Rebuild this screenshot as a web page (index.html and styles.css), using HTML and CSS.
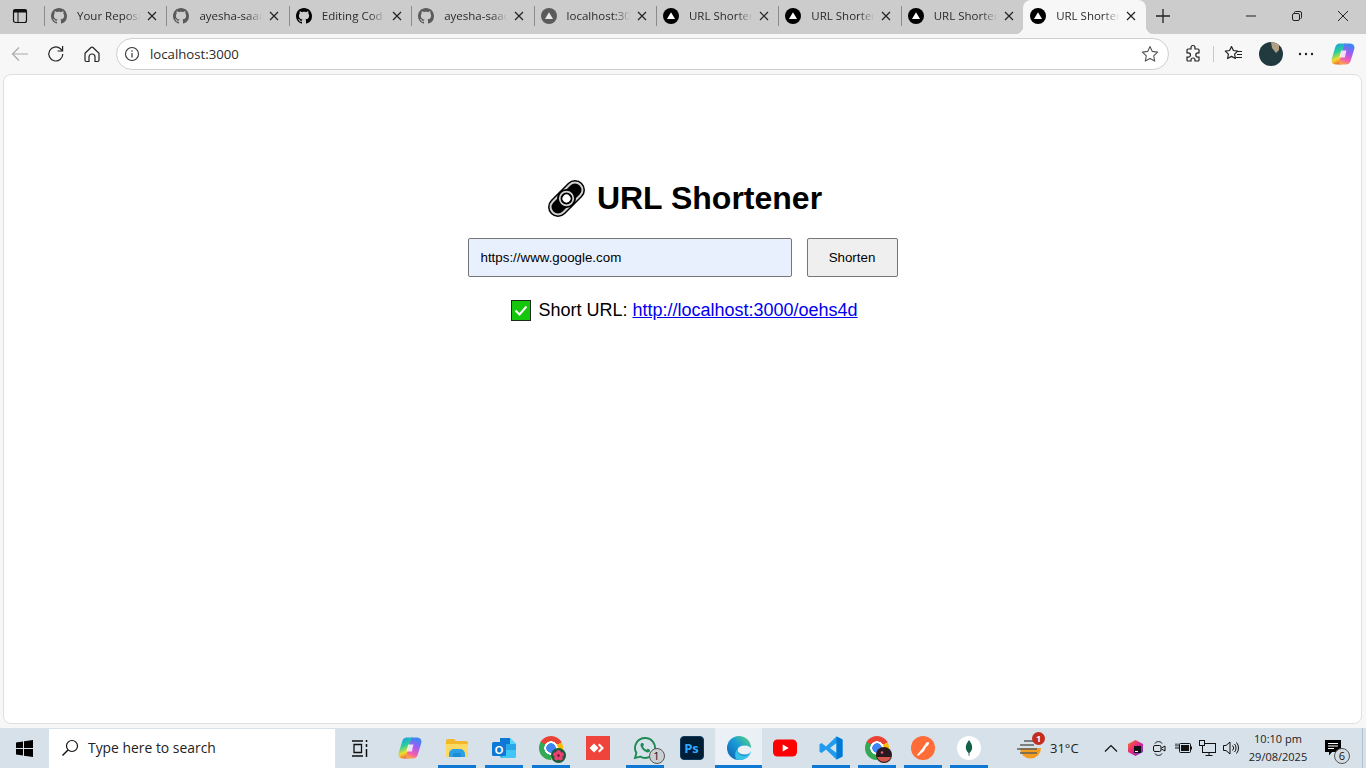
FILE: index.html
```html
<!DOCTYPE html>
<html lang="en">
<head>
<meta charset="utf-8">
<title>URL Shortener</title>
<link rel="stylesheet" href="styles.css">
</head>
<body>
<svg class="defs" width="0" height="0" aria-hidden="true">
  <defs>
    <symbol id="gh" viewBox="0 0 16 16"><path d="M8 0C3.58 0 0 3.58 0 8c0 3.54 2.29 6.53 5.47 7.59.4.07.55-.17.55-.38 0-.19-.01-.82-.01-1.49-2.01.37-2.53-.49-2.69-.94-.09-.23-.48-.94-.82-1.13-.28-.15-.68-.52-.01-.53.63-.01 1.08.58 1.23.82.72 1.21 1.87.87 2.33.66.07-.52.28-.87.51-1.07-1.78-.2-3.64-.89-3.64-3.95 0-.87.31-1.59.82-2.15-.08-.2-.36-1.02.08-2.12 0 0 .67-.21 2.2.82.64-.18 1.32-.27 2-.27.68 0 1.36.09 2 .27 1.53-1.04 2.2-.82 2.2-.82.44 1.1.16 1.92.08 2.12.51.56.82 1.27.82 2.15 0 3.07-1.87 3.75-3.65 3.95.29.25.54.73.54 1.48 0 1.07-.01 1.93-.01 2.2 0 .21.15.46.55.38A8.013 8.013 0 0016 8c0-4.42-3.58-8-8-8z"/></symbol>
    <symbol id="next" viewBox="0 0 16 16"><circle cx="8" cy="8" r="8"/><path d="M8 4.200 12 11H4z" fill="#fff"/></symbol>
    <symbol id="x" viewBox="0 0 10 10"><path d="M1 1l8 8M9 1l-8 8" fill="none" stroke="#222" stroke-width="1.200"/></symbol>
    <linearGradient id="cpa" x1="0.2" y1="0" x2="0.5" y2="1"><stop offset="0" stop-color="#1f9be8"/><stop offset=".4" stop-color="#27cf9a"/><stop offset=".72" stop-color="#f2dc2c"/><stop offset="1" stop-color="#f4563c"/></linearGradient>
    <linearGradient id="cpb" x1="0.7" y1="0" x2="0.4" y2="1"><stop offset="0" stop-color="#2f8cf5"/><stop offset=".45" stop-color="#a35cf2"/><stop offset=".8" stop-color="#f45fb0"/><stop offset="1" stop-color="#f8a04e"/></linearGradient>
    <symbol id="copilot" viewBox="0 0 24 24">
      <path d="M8.500 1.500H14c1.300 0 1.900 1 1.400 2.400L10.500 22.500H5.500C1.800 22.500-.2 20.200.8 16.800L4.300 5C5 2.800 6.500 1.500 8.500 1.500z" fill="url(#cpa)"/>
      <path d="M13.500 1.500h5c3.700 0 5.700 2.400 4.700 5.700l-3.500 11.600c-.7 2.300-2.400 3.700-4.700 3.700H9.500c-1.300 0-1.900-1-1.400-2.300L13 3.500c.2-.8.400-2 .5-2z" fill="url(#cpb)"/>
      <path d="M10.200 8.500h5.300L13.800 15.500H8.300z" fill="#fff" opacity=".8"/>
    </symbol>
  </defs>
</svg>

<header class="tabstrip">
  <div class="sidebar-btn">
    <svg width="16" height="16" viewBox="0 0 16 16"><rect x="1.500" y="1.500" width="13" height="13" rx="2" fill="none" stroke="#111" stroke-width="1.200"/><rect x="1.500" y="1.500" width="13" height="3" fill="#111"/><path d="M6 4v10" stroke="#111"/></svg>
  </div>
  <div class="tab"><i class="sep"></i><svg class="fav dim"><use href="#gh"/></svg><span class="tab-title">Your Reposi</span><svg class="tab-x"><use href="#x"/></svg></div>
  <div class="tab"><i class="sep"></i><svg class="fav dim"><use href="#gh"/></svg><span class="tab-title">ayesha-saac</span><svg class="tab-x"><use href="#x"/></svg></div>
  <div class="tab"><i class="sep"></i><svg class="fav"><use href="#gh"/></svg><span class="tab-title">Editing Cod</span><svg class="tab-x"><use href="#x"/></svg></div>
  <div class="tab"><i class="sep"></i><svg class="fav dim"><use href="#gh"/></svg><span class="tab-title">ayesha-saac</span><svg class="tab-x"><use href="#x"/></svg></div>
  <div class="tab"><i class="sep"></i><svg class="fav dim"><use href="#next"/></svg><span class="tab-title">localhost:30</span><svg class="tab-x"><use href="#x"/></svg></div>
  <div class="tab"><i class="sep"></i><svg class="fav"><use href="#next"/></svg><span class="tab-title">URL Shorter</span><svg class="tab-x"><use href="#x"/></svg></div>
  <div class="tab"><i class="sep"></i><svg class="fav"><use href="#next"/></svg><span class="tab-title">URL Shorter</span><svg class="tab-x"><use href="#x"/></svg></div>
  <div class="tab"><i class="sep"></i><svg class="fav"><use href="#next"/></svg><span class="tab-title">URL Shorter</span><svg class="tab-x"><use href="#x"/></svg></div>
  <div class="tab active"><i class="sep none"></i><svg class="fav"><use href="#next"/></svg><span class="tab-title">URL Shorter</span><svg class="tab-x"><use href="#x"/></svg></div>
  <div class="new-tab"><svg width="16" height="16" viewBox="0 0 16 16"><path d="M8 1v14M1 8h14" stroke="#222" stroke-width="1.300"/></svg></div>
  <div class="win-controls">
    <div class="win-btn"><svg width="12" height="12" viewBox="0 0 12 12"><path d="M1 6h10" stroke="#222"/></svg></div>
    <div class="win-btn"><svg width="12" height="12" viewBox="0 0 12 12"><rect x="1.500" y="3.500" width="7" height="7" rx="1.500" fill="none" stroke="#222"/><path d="M3.500 3V2.500a1 1 0 0 1 1-1h4.500a1.500 1.500 0 0 1 1.500 1.500v4.500a1 1 0 0 1-1 1" fill="none" stroke="#222"/></svg></div>
    <div class="win-btn"><svg width="12" height="12" viewBox="0 0 12 12"><path d="M1 1l10 10M11 1L1 11" stroke="#222"/></svg></div>
  </div>
</header>

<nav class="toolbar">
  <div class="tool first"><svg width="20" height="20" viewBox="0 0 20 20"><path d="M18 10H2.500M9 3.500 2.500 10 9 16.500" fill="none" stroke="#aaa" stroke-width="1.200"/></svg></div>
  <div class="tool"><svg width="20" height="20" viewBox="0 0 20 20"><path d="M16.800 10a7 7 0 1 1-2.300-5.200L16.500 7" fill="none" stroke="#222" stroke-width="1.200"/><path d="M16.600 2v5h-5" fill="none" stroke="#222" stroke-width="1.200"/></svg></div>
  <div class="tool"><svg width="20" height="20" viewBox="0 0 20 20"><path d="M3 9.200 9 3.500a1.500 1.500 0 0 1 2 0l6 5.700V16a1.500 1.500 0 0 1-1.500 1.500H13V13a3 3 0 0 0-6 0v4.500H4.500A1.500 1.500 0 0 1 3 16z" fill="none" stroke="#222" stroke-width="1.200"/></svg></div>
  <div class="address">
    <svg class="addr-info" width="16" height="16" viewBox="0 0 16 16"><circle cx="8" cy="8" r="6.500" fill="none" stroke="#333" stroke-width="1.100"/><path d="M8 7v4.500" stroke="#333" stroke-width="1.200"/><circle cx="8" cy="5" r=".8" fill="#333"/></svg>
    <span class="addr-text">localhost:3000</span>
    <svg class="addr-star" width="18" height="18" viewBox="0 0 18 18"><path d="M9 1.500l2.300 4.900 5.300.7-3.900 3.700 1 5.300L9 13.500 4.300 16.100l1-5.300L1.400 7.100l5.300-.7z" fill="none" stroke="#555" stroke-width="1.100" stroke-linejoin="round"/></svg>
  </div>
  <div class="tool ext"><svg width="20" height="20" viewBox="0 0 20 20"><path d="M8 3.500a2 2 0 0 1 4 0V5h3a1 1 0 0 1 1 1v2.800h-1a2.200 2.200 0 0 0 0 4.400h1V16a1 1 0 0 1-1 1h-3v-1a2 2 0 0 0-4 0v1H5a1 1 0 0 1-1-1v-2.800h1.300a2.200 2.200 0 0 0 0-4.400H4V6a1 1 0 0 1 1-1h3z" fill="none" stroke="#222" stroke-width="1.200"/></svg></div>
  <i class="tool-sep"></i>
  <div class="tool"><svg width="20" height="20" viewBox="0 0 20 20"><path d="M7.500 2.500l1.900 4 4.300.6-3.100 3 .8 4.400-3.900-2.100-3.900 2.100.8-4.400-3.100-3 4.300-.6z" fill="none" stroke="#222" stroke-width="1.200" stroke-linejoin="round"/><path d="M13 7.500h5M13 10.500h5M12 13.500h6" stroke="#222" stroke-width="1.100"/></svg></div>
  <div class="tool avatar-slot"><svg width="24" height="24" viewBox="0 0 24 24"><defs><clipPath id="av"><circle cx="12" cy="12" r="12"/></clipPath></defs><g clip-path="url(#av)"><rect width="24" height="24" fill="#213a3f"/><path d="M12 0l1 6 4 5 3-3 0-8z" fill="#b3a083"/></g></svg></div>
  <div class="tool"><svg width="16" height="4" viewBox="0 0 16 4"><circle cx="2" cy="2" r="1.200" fill="#222"/><circle cx="8" cy="2" r="1.200" fill="#222"/><circle cx="14" cy="2" r="1.200" fill="#222"/></svg></div>
  <div class="tool cp"><svg width="24" height="24"><use href="#copilot"/></svg></div>
</nav>

<main class="page">
  <h1 class="title"><svg class="title-icon" width="37" height="37" viewBox="0 0 37 37"><g transform="rotate(-45 18.500 18.500)"><rect x="-3.500" y="8.500" width="44" height="20" rx="10" fill="#000"/><rect x="-1" y="11" width="39" height="15" rx="7.500" fill="none" stroke="#d2d2d2" stroke-width="2"/><circle cx="18.500" cy="18.500" r="9.500" fill="#000"/><circle cx="18.500" cy="18.500" r="6.800" fill="none" stroke="#d2d2d2" stroke-width="1.700"/><circle cx="18.500" cy="18.500" r="4" fill="#fff"/></g></svg>URL Shortener</h1>
  <form class="form">
    <input class="url-input" type="text" value="https://www.google.com" aria-label="URL">
    <button class="submit" type="button">Shorten</button>
  </form>
  <p class="result"><svg class="check" width="20" height="21" viewBox="0 0 20 21"><rect x=".5" y=".5" width="19" height="20" fill="#16c60c" stroke="#1d2b1d"/><path d="M4.500 10.500l4 4 7-8" fill="none" stroke="#fff" stroke-width="2"/></svg>Short URL: <a href="#">http://localhost:3000/oehs4d</a></p>
</main>

<footer class="taskbar">
  <div class="start"><svg width="17" height="17" viewBox="0 0 17 17"><path d="M0 2.400 7 1.400V8H0zM8 1.300 17 0v8H8zM0 9h7v6.600L0 14.600zM8 9h9v8l-9-1.300z" fill="#000"/></svg></div>
  <div class="search">
    <svg width="18" height="18" viewBox="0 0 18 18"><circle cx="11" cy="7" r="5.500" fill="none" stroke="#111" stroke-width="1.200"/><path d="M7 11 1.500 16.500" stroke="#111" stroke-width="1.400"/></svg>
    <span>Type here to search</span>
  </div>
  <div class="taskview"><svg width="16" height="17" viewBox="0 0 16 17"><path d="M0 1h11M0 16h11M2 4.500h7.500v8H2z" fill="none" stroke="#111" stroke-width="1.300"/><path d="M14.500 0v2M14.500 4v3M14.500 9v8" stroke="#111" stroke-width="1.500"/></svg></div>

  <div class="apps">
    <div class="slot"><svg class="app" width="24" height="24"><use href="#copilot"/></svg><i class="run off"></i></div>
    <div class="slot"><svg class="app" width="24" height="24" viewBox="0 0 24 24"><path d="M1 5a2 2 0 0 1 2-2h6l2 2h10a2 2 0 0 1 2 2v13a1 1 0 0 1-1 1H2a1 1 0 0 1-1-1z" fill="#f2b829"/><rect x="1" y="8" width="22" height="13" rx="1" fill="#fcd962"/><path d="M7 21v-6h10v6z" fill="#1b8cd8"/><path d="M4 21v-3a5 5 0 0 1 5-5h6a5 5 0 0 1 5 5v3h-4v-2.500a1.500 1.500 0 0 0-1.500-1.500h-5A1.500 1.500 0 0 0 8 18.500V21z" fill="#2b9fe3"/></svg><i class="run"></i></div>
    <div class="slot"><svg class="app" width="24" height="24" viewBox="0 0 24 24"><path d="M8 2h10l6 6v12a2 2 0 0 1-2 2H10a2 2 0 0 1-2-2z" fill="#28a8ea"/><path d="M8 2h10v6H8z" fill="#0f78d4"/><path d="M18 2l6 6h-6z" fill="#50d9ff"/><path d="M10 14h14v6a2 2 0 0 1-2 2H10z" fill="#50d9ff" opacity=".6"/><rect x="0" y="6" width="14" height="14" rx="1.500" fill="#0f78d4"/><text class="o-letter" x="7" y="17.500" text-anchor="middle">O</text></svg><i class="run"></i></div>
    <div class="slot"><span class="app chrome"><svg class="chrome-badge" width="15" height="15" viewBox="0 0 15 15"><circle cx="7.500" cy="7.500" r="7.500" fill="#155c3b"/><g fill="#ee3f72"><circle cx="7.500" cy="4.300" r="2.300"/><circle cx="4.400" cy="6.600" r="2.300"/><circle cx="10.600" cy="6.600" r="2.300"/><circle cx="5.600" cy="10.300" r="2.300"/><circle cx="9.400" cy="10.300" r="2.300"/></g><circle cx="7.500" cy="7.500" r="1.200" fill="#8c1240"/></svg></span><i class="run"></i></div>
    <div class="slot"><svg class="app" width="24" height="24" viewBox="0 0 24 24"><rect width="24" height="24" fill="#ef443b"/><path d="M8 7.500 12.500 12 8 16.500 3.500 12z" fill="#fff"/><path d="M13.500 7.500 18 12l-4.500 4.500-1.500-1.500 3-3-3-3z" fill="#fff"/></svg><i class="run off"></i></div>
    <div class="slot"><span class="app wa"><svg width="24" height="24" viewBox="0 0 24 24"><path d="M12 2a10 10 0 0 0-8.600 15L2 22l5.200-1.300A10 10 0 1 0 12 2z" fill="none" stroke="#1e8a55" stroke-width="1.900"/><path d="M8.500 7c-1 .8-1.300 2-.7 3.500 1 2.600 3.200 4.800 5.800 5.700 1.500.5 2.700.1 3.400-.9l-.1-1.500-2.200-1.100-1.100 1.100c-1.500-.5-3-2-3.600-3.600l1-1.100L10 7z" fill="#1e8a55"/></svg><b class="count">1</b></span><i class="run"></i></div>
    <div class="slot"><span class="app ps">Ps</span><i class="run off"></i></div>
    <div class="slot current"><svg class="app" width="24" height="24" viewBox="0 0 24 24"><defs><linearGradient id="ed1" x1="0" y1="1" x2="1" y2="0"><stop offset="0" stop-color="#0c5fb0"/><stop offset=".55" stop-color="#1a9bd8"/><stop offset="1" stop-color="#5bdc6e"/></linearGradient></defs><circle cx="12" cy="12" r="12" fill="url(#ed1)"/><ellipse cx="17.500" cy="14" rx="7" ry="4.500" fill="#eaf0f5"/><path d="M10.500 13c-.5 4 3 7 6.500 7 2.500 0 5-1 7-5-.5 5-5.500 9-11 9-1.500 0-3-.4-4-1-1.500-3-1-8 1.500-10z" fill="#35c1e8"/></svg><i class="run wide"></i></div>
    <div class="slot"><svg class="app" width="24" height="24" viewBox="0 0 24 24"><rect y="3.500" width="24" height="17" rx="4.500" fill="#f00"/><path d="M9.700 8.500v7l6-3.500z" fill="#fff"/></svg><i class="run off"></i></div>
    <div class="slot"><svg class="app" width="24" height="24" viewBox="0 0 24 24"><path d="M17.500.5 23.500 3.400v17.200l-6 2.900L7 13.500l-4.400 3.400L.5 15.800v-7.600l2.100-1.100L7 10.500zM17.500 7 11 12l6.500 5z" fill="#1f9cf0" fill-rule="evenodd"/><path d="M17.500.5 23.500 3.400v17.200l-6 2.900z" fill="#0078d4"/></svg><i class="run"></i></div>
    <div class="slot"><span class="app chrome"><svg class="chrome-badge" width="16" height="16" viewBox="0 0 16 16"><circle cx="8" cy="8" r="8" fill="#2a1a20"/><path d="M1 10h14a7.500 7.500 0 0 1-14 0z" fill="#d8574a"/><circle cx="6" cy="5.500" r="1.300" fill="#e35c7c"/></svg></span><i class="run"></i></div>
    <div class="slot"><svg class="app" width="24" height="24" viewBox="0 0 24 24"><circle cx="12" cy="12" r="12" fill="#ff6c37"/><path d="M6 19l5-6 2 2-6 5zM11 13l4-6c1-1.500 3-1.500 3 0 0 1.500-1 2.500-3 4l-2 4z" fill="#fff"/></svg><i class="run"></i></div>
    <div class="slot"><svg class="app" width="24" height="24" viewBox="0 0 24 24"><circle cx="12" cy="12" r="12" fill="#fff"/><path d="M12 4c2 2.500 3.200 5 3.200 7.500 0 2.500-1.500 4.500-2.700 5.500l-.2 3h-.6l-.2-3c-1.200-1-2.700-3-2.700-5.500C8.800 9 10 6.500 12 4z" fill="#136149"/></svg><i class="run"></i></div>
  </div>

  <div class="weather">
    <span class="wx-icon"><svg width="25" height="24" viewBox="0 0 25 24"><path d="M3 12h21a10.500 10.500 0 0 1-21 0z" fill="#f39c1f"/><path d="M7 5h9M3 9h14M0 13h20M3 17h17" stroke="#5f5f5f" stroke-width="1.700"/></svg><b class="wx-badge">1</b></span>
    <span class="temp">31°C</span>
  </div>
  <div class="tray">
    <div class="tray-item"><svg width="14" height="8" viewBox="0 0 14 8"><path d="M1 7.500 7 1.500l6 6" fill="none" stroke="#111" stroke-width="1.200"/></svg></div>
    <div class="tray-item"><svg width="15" height="16" viewBox="0 0 15 16"><defs><linearGradient id="jb" x1="0" y1="0" x2="1" y2="1"><stop offset="0" stop-color="#f97a12"/><stop offset=".5" stop-color="#e5218f"/><stop offset="1" stop-color="#5a3de0"/></linearGradient></defs><path d="M7.500 0 15 4v8l-7.500 4L0 12V4z" fill="url(#jb)"/><rect x="6" y="6" width="7" height="7" fill="#111"/><path d="M7 11.500h3" stroke="#fff"/></svg></div>
    <div class="tray-item"><svg width="13" height="17" viewBox="0 0 13 17"><path d="M2 3.500C3 1 8 1 9 3.500M2 13.500C3 16 8 16 9 13.500" fill="none" stroke="#111"/><rect x=".5" y="5.500" width="7.500" height="6" rx="1.500" fill="none" stroke="#111"/><path d="M8.500 8l3.500-2v5l-3.500-2" fill="none" stroke="#111"/></svg></div>
    <div class="tray-item"><svg width="17" height="12" viewBox="0 0 17 12"><rect x="4.500" y="1.500" width="11" height="9" rx="1" fill="none" stroke="#111"/><rect x="6" y="3" width="8" height="6" fill="#111"/><path d="M0 6h4M1 1.500v3M3 1.500v3" stroke="#111"/><path d="M16 4.500h1v3h-1z" fill="#111"/></svg></div>
    <div class="tray-item"><svg width="17" height="17" viewBox="0 0 17 17"><rect x="3.500" y="3.500" width="13" height="9" fill="none" stroke="#111"/><rect x=".5" y=".5" width="5" height="5" fill="#d6e1e9" stroke="#111"/><path d="M10 12.500v3M6.500 15.500h7" stroke="#111"/></svg></div>
    <div class="tray-item"><svg width="16" height="14" viewBox="0 0 16 14"><path d="M.5 4.500h2.500L7 1v12L3 9.500H.5z" fill="none" stroke="#111"/><path d="M9.500 4.500a3.500 3.500 0 0 1 0 5M11.500 3a6 6 0 0 1 0 8M13.500 1.500a8.500 8.500 0 0 1 0 11" fill="none" stroke="#111"/></svg></div>
  </div>
  <div class="clock"><span>10:10 pm</span><span>29/08/2025</span></div>
  <div class="notify"><svg width="16" height="16" viewBox="0 0 16 16"><path d="M0 0h16v12H7l-3 3.500V12H0z" fill="#000"/><path d="M3 3.500h10M3 6h10M3 8.500h6" stroke="#fff"/></svg><b class="note-count">6</b></div>
  <i class="show-desktop"></i>
</footer>
</body>
</html>
```

FILE: styles.css
```css
* { box-sizing: border-box; }
html, body { margin: 0; height: 768px; overflow: hidden; }
body {
  display: flex;
  flex-direction: column;
  width: 1366px;
  background: #f7f7f7;
  font-family: "Open Sans", "Noto Sans", sans-serif;
  color: #222;
}
i { display: block; font-style: normal; }
.defs { position: absolute; }

/* tab strip */
.tabstrip { display: flex; align-items: center; height: 34px; background: #cccccc; flex: none; }
.sidebar-btn { width: 44px; height: 34px; padding: 0 0 2px 12px; display: flex; align-items: center; flex: none; }
.tab { display: flex; align-items: center; flex: none; width: 122.400px; height: 34px; padding-bottom: 2px; position: relative; }
.sep { width: 1px; height: 20px; background: #8b8b8b; flex: none; }
.sep.none { background: transparent; }
.fav { width: 16px; height: 16px; margin-left: 6px; flex: none; fill: #000; }
.fav.dim { opacity: .55; }
.tab-title {
  width: 66px; margin-left: 10px; font-size: 11.500px; line-height: 16px; white-space: nowrap; color: #2b2b2b;
  -webkit-mask-image: linear-gradient(90deg, #000 72%, transparent 96%);
  mask-image: linear-gradient(90deg, #000 72%, transparent 96%);
  flex: none;
}
.tab-x { width: 10px; height: 10px; margin-left: 4px; flex: none; }
.tab.active { width: 122.800px; background: #f7f7f7; border-radius: 8px 8px 0 0; }
.tab.active::before, .tab.active::after { content: ""; position: absolute; bottom: 0; width: 8px; height: 8px; }
.tab.active::before { left: -8px; background: radial-gradient(circle at 0 0, transparent 8px, #f7f7f7 8.500px); }
.tab.active::after { right: -8px; background: radial-gradient(circle at 100% 0, transparent 8px, #f7f7f7 8.500px); }
.new-tab { width: 34px; height: 34px; padding-bottom: 2px; display: flex; align-items: center; justify-content: center; flex: none; }
.win-controls { display: flex; margin-left: auto; }
.win-btn { width: 46px; height: 34px; padding-bottom: 2px; display: flex; align-items: center; justify-content: center; }

/* toolbar */
.toolbar { display: flex; align-items: center; height: 40px; flex: none; background: #f7f7f7; }
.tool { width: 36px; height: 32px; display: flex; align-items: center; justify-content: center; flex: none; }
.tool.first { margin-left: 2px; }
.address {
  display: flex; align-items: center; width: 1053px; height: 32px; margin-left: 6px; padding: 0 9px 0 7px;
  background: #fff; border: 1px solid #cfcfcf; border-radius: 16px; flex: none;
}
.addr-text { margin-left: 10px; font-size: 13.200px; color: #2a2a2a; }
.addr-star { margin-left: auto; }
.tool.ext { margin-left: 6px; }
.tool-sep { width: 1px; height: 16px; background: #c8c8c8; margin: 0 2px; flex: none; }
.avatar-slot { width: 35px; margin-left: 1px; }
.tool.cp { margin-left: 1px; }

/* page */
.page {
  height: 650px; width: 1359px; margin-left: 3px; flex: none; padding-top: 105px;
  display: flex; flex-direction: column; align-items: center;
  background: #fff; border: 1px solid #e0e0e0; border-radius: 8px;
  font-family: "Liberation Sans", Arial, sans-serif; color: #000;
}
.title { margin: 0 0 0 1px; display: flex; align-items: center; font-size: 32px; line-height: 37px; font-weight: 700; }
.title-icon { margin: 0 12px 0 4px; flex: none; }
.form { display: flex; gap: 15px; margin: 21px 0 0; }
.url-input {
  width: 324px; height: 39px; padding: 0 11px 0 12px; background: #e8f0fe; border: 1px solid #767676; border-radius: 2px;
  font: 13.333px "Liberation Sans", Arial, sans-serif; color: #000;
}
.submit {
  width: 91px; height: 39px; padding: 0; background: #efefef; border: 1px solid #767676; border-radius: 2px;
  font: 13.333px "Liberation Sans", Arial, sans-serif; color: #000;
}
.result { margin: 23px 0 0; padding-left: 4px; font-size: 18px; line-height: 21px; display: flex; align-items: center; white-space: pre; }
.check { margin-right: 7px; flex: none; }
.result a { color: #0000ee; text-decoration: underline; }

/* taskbar */
.taskbar { display: flex; height: 40px; margin-top: 4px; flex: none; background: #d6e1e9; }
.start { width: 49px; display: flex; align-items: center; justify-content: center; flex: none; }
.search {
  display: flex; align-items: center; width: 287px; margin-top: 1px; padding: 0 0 2px 12px; background: #fff; border-right: 1px solid #dde4e9;
  font-size: 13.900px; color: #222; flex: none;
}
.search span { margin-left: 9px; }
.taskview { width: 48px; display: flex; align-items: center; justify-content: center; flex: none; }
.apps { display: flex; margin-left: 2px; flex: none; }
.slot { width: 47px; height: 40px; display: flex; flex-direction: column; align-items: center; justify-content: space-between; padding-top: 8px; flex: none; }
.slot.current ~ .slot { width: 46px; }
.slot.current { background: #eaf0f5; }
.app { width: 24px; height: 24px; display: block; flex: none; position: relative; }
.run { width: 38px; height: 3px; background: #0f78d4; flex: none; }
.run.off { background: transparent; }
.run.wide { width: 100%; }
.chrome {
  border-radius: 50%;
  background:
    radial-gradient(circle, #4285f4 0 4.500px, #fff 5px 6.500px, transparent 7px),
    conic-gradient(#ea4335 0 60deg, #fbbc04 60deg 180deg, #34a853 180deg 300deg, #ea4335 300deg);
}
.chrome-badge { position: absolute; right: -3px; bottom: -3px; }
.o-letter { font: 700 11px "Liberation Sans", sans-serif; fill: #fff; }
.count {
  position: absolute; right: -8px; bottom: -4px; width: 16px; height: 16px; border-radius: 50%; background: #c9cfd3; border: 1px solid #555;
  font: 400 11px/14px "Open Sans", sans-serif; text-align: center; color: #111;
}
.ps {
  background: #001e36; border: 1px solid #0d3a5c; border-radius: 4px; color: #31a8ff;
  font: 700 13px/22px "Open Sans", sans-serif; text-align: center;
}
.weather { display: flex; align-items: center; margin-left: 25px; width: 82px; gap: 8px; flex: none; }
.wx-icon { position: relative; width: 25px; height: 24px; display: block; }
.wx-badge {
  position: absolute; right: -3px; top: -4px; width: 13px; height: 13px; border-radius: 50%; background: #c42b1c; color: #fff;
  font: 700 9px/13px "Open Sans", sans-serif; text-align: center;
}
.temp { font-size: 13px; color: #222; }
.tray { display: flex; align-items: center; flex: none; }
.tray-item { width: 24px; height: 40px; display: flex; align-items: center; justify-content: center; }
.clock {
  width: 70px; display: flex; flex-direction: column; align-items: center; justify-content: center; flex: none;
  font-size: 11px; line-height: 18px; color: #222;
}
.notify { width: 40px; display: flex; align-items: center; justify-content: center; position: relative; flex: none; }
.note-count {
  position: absolute; left: 21px; top: 20px; width: 16px; height: 16px; border-radius: 50%; background: #d6dde2; border: 1px solid #555;
  font: 400 11px/14px "Open Sans", sans-serif; text-align: center; color: #111;
}
.show-desktop { width: 4px; margin-left: 9px; border-left: 1px solid #b5c0c8; flex: none; }
```
